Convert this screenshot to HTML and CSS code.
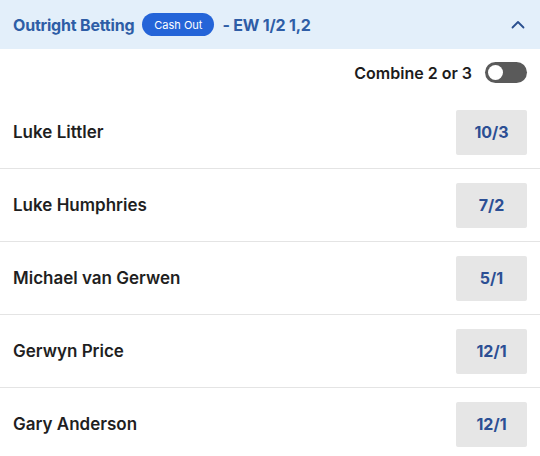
FILE: index.html
```html
<!DOCTYPE html>
<html>
<head>
<meta charset="utf-8">
<link rel="stylesheet" href="styles.css">
</head>
<body>
<div class="market">
  <div class="header">
    <span class="title">Outright Betting</span>
    <span class="pill">Cash Out</span>
    <span class="title">- EW 1/2 1,2</span>
    <svg class="chev" width="14" height="9" viewBox="0 0 14 9"><path d="M1.5 7.5 L7 2 L12.5 7.5" fill="none" stroke="#2a4f8f" stroke-width="1.8" stroke-linecap="round" stroke-linejoin="round"/></svg>
  </div>
  <div class="combine">
    <span class="combine-label">Combine 2 or 3</span>
    <span class="toggle"><span class="knob"></span></span>
  </div>
  <div class="row"><span class="name">Luke Littler</span><span class="odds">10/3</span></div>
  <div class="row"><span class="name">Luke Humphries</span><span class="odds">7/2</span></div>
  <div class="row"><span class="name">Michael van Gerwen</span><span class="odds">5/1</span></div>
  <div class="row"><span class="name">Gerwyn Price</span><span class="odds">12/1</span></div>
  <div class="row"><span class="name">Gary Anderson</span><span class="odds">12/1</span></div>
</div>
</body>
</html>
```
FILE: styles.css
```css
* { box-sizing: border-box; }
body {
  margin: 0;
  background: #fff;
  font-family: Inter, "Noto Sans", sans-serif;
}
.market { width: 540px; }
.header {
  height: 49px;
  background: #e3effa;
  display: flex;
  align-items: center;
  padding: 0 13px;
  gap: 8px;
}
.title {
  font-size: 16px;
  font-weight: 700;
  color: #2e5da6;
  letter-spacing: -0.2px;
}
.pill {
  background: #2464d8;
  color: #fff;
  font-size: 11px;
  font-weight: 400;
  height: 23px;
  padding: 0 12px;
  border-radius: 12px;
  display: flex;
  align-items: center;
}
.chev { margin-left: auto; margin-right: 2px; }
.combine {
  height: 47px;
  display: flex;
  align-items: center;
  justify-content: flex-end;
  padding-right: 13px;
  gap: 13px;
}
.combine-label {
  font-size: 16px;
  font-weight: 600;
  color: #1c1c1c;
}
.toggle {
  width: 42px;
  height: 21px;
  border-radius: 11px;
  background: #5a5a5a;
  display: flex;
  align-items: center;
  padding-left: 3px;
}
.knob {
  width: 15px;
  height: 15px;
  border-radius: 50%;
  background: #fff;
}
.row {
  height: 73px;
  border-bottom: 1px solid #e4e4e4;
  display: flex;
  align-items: center;
  justify-content: space-between;
  padding: 0 13px;
}
.name {
  font-size: 17px;
  font-weight: 600;
  color: #1f1f1f;
}
.odds {
  width: 71px;
  height: 45px;
  background: #e6e6e6;
  border-radius: 2px;
  display: flex;
  align-items: center;
  justify-content: center;
  font-size: 16px;
  font-weight: 700;
  color: #2c4f94;
}
```
